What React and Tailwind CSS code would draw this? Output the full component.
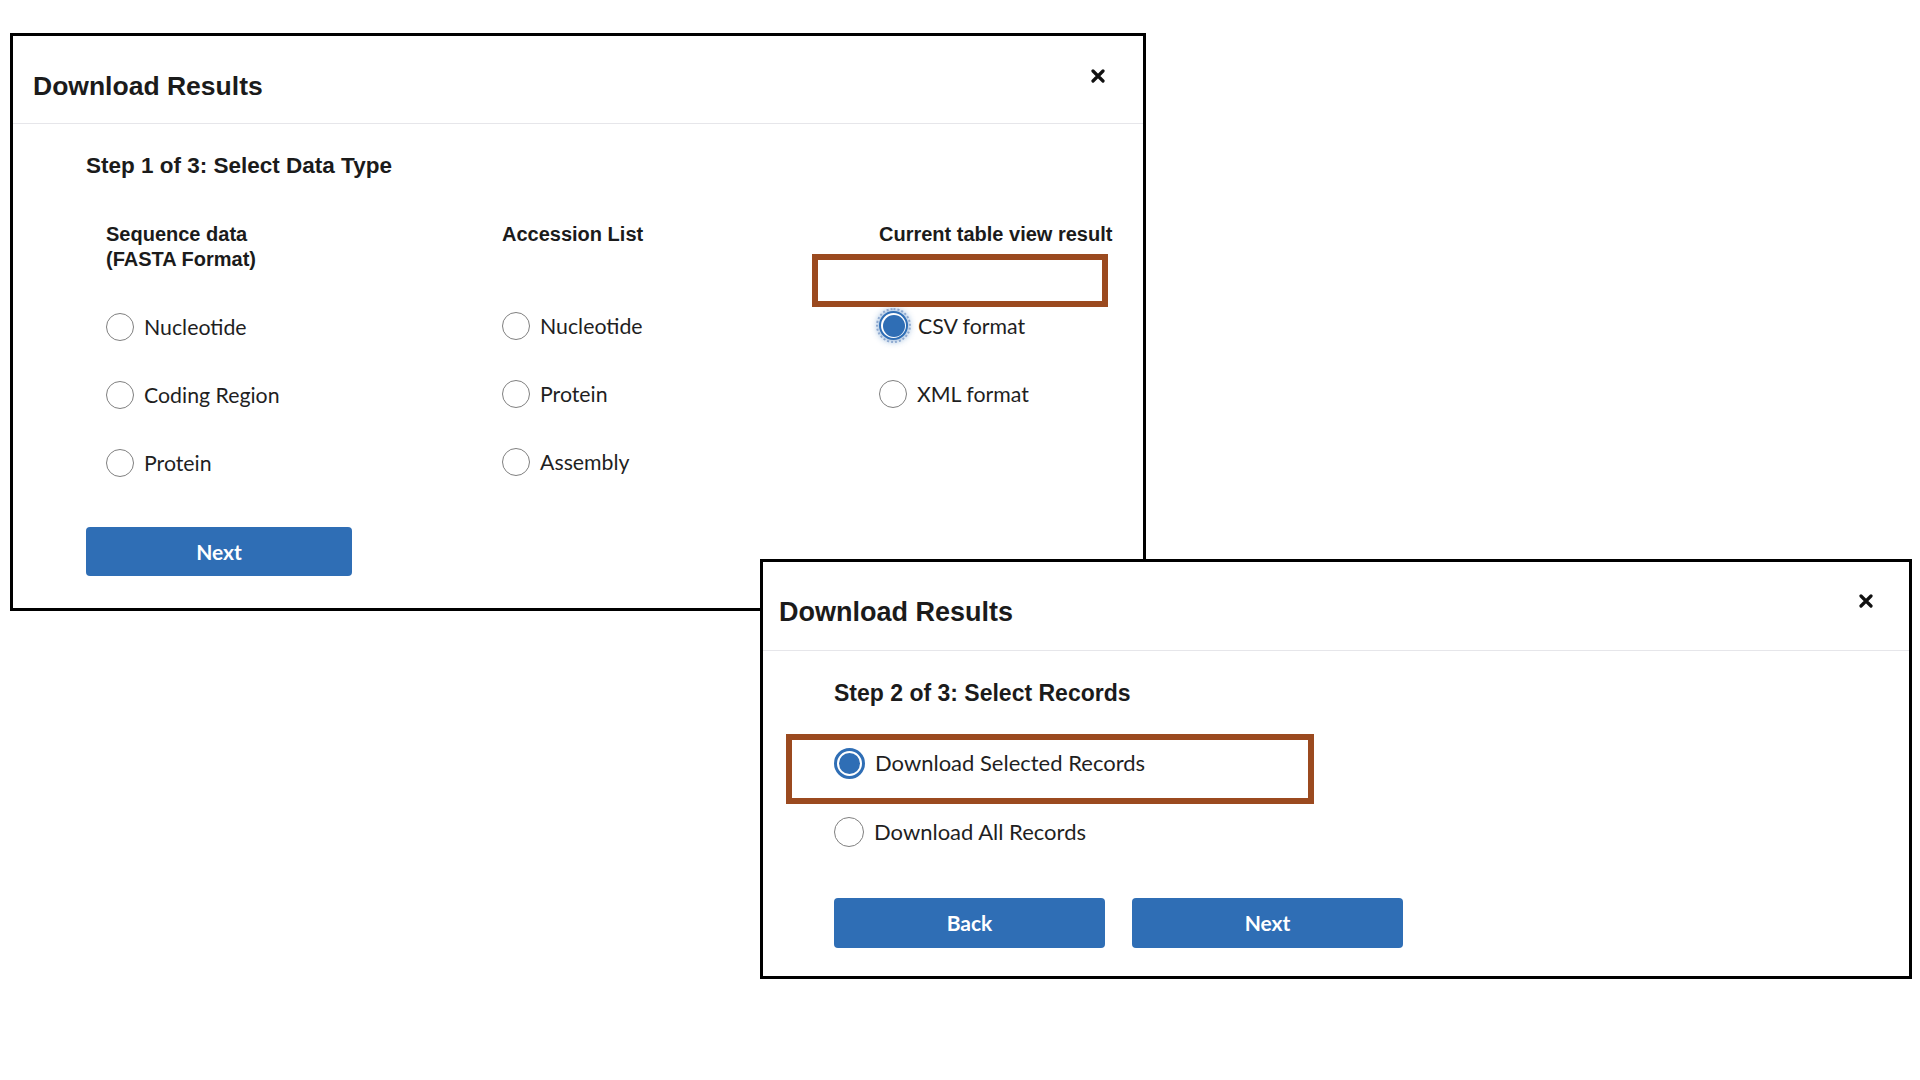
import React from "react";

function CloseX() {
  return (
    <svg width="14" height="14" viewBox="0 0 14 14" className="shrink-0">
      <path d="M2 2 L12 12 M12 2 L2 12" stroke="#111" strokeWidth="3.2" strokeLinecap="round" />
    </svg>
  );
}

function Radio({ label, checked, focus, big }) {
  const box = big ? "h-[30px] w-[30px]" : "h-[28px] w-[28px]";
  const text = big
    ? "font-['Lato',sans-serif] text-[22px] leading-[28px] text-[#1f1f1f]"
    : "font-['Lato',sans-serif] text-[21.3px] leading-[28px] text-[#1f1f1f]";
  return (
    <div className={big ? "flex h-[30px] items-center gap-[10px]" : "flex h-[29px] items-center gap-[10px]"}>
      {checked ? (
        <span
          className={
            focus
              ? "flex h-[29px] w-[29px] shrink-0 rounded-full border-[2.5px] border-[#2f6eb5] bg-white p-[1.5px] outline-2 outline-dotted outline-[#8ea9d0] outline-offset-[1px] shadow-[0_0_6px_2px_rgba(47,110,181,0.45)]"
              : "flex h-[31px] w-[31px] shrink-0 rounded-full border-[3px] border-[#2f6eb5] bg-white p-[2px]"
          }
        >
          <span className="h-full w-full rounded-full bg-[#2f6eb5]" />
        </span>
      ) : (
        <span className={`${box} shrink-0 rounded-full border-[1.5px] border-[#808080] bg-white`} />
      )}
      <span className={text}>{label}</span>
    </div>
  );
}

function Button({ children, w }) {
  return (
    <button
      className={`${w} flex items-center justify-center rounded-[4px] bg-[#2f6eb5] font-['Lato',sans-serif] text-[21px] font-bold text-white`}
    >
      {children}
    </button>
  );
}

export default function App() {
  return (
    <div className="relative h-[1080px] w-[1920px] overflow-hidden bg-white font-['Liberation_Sans',Arial,sans-serif] text-[#1b1b1b]">
      {/* Dialog 1 */}
      <div className="absolute left-[10px] top-[33px] h-[578px] w-[1136px] border-[3px] border-black bg-white">
        <div className="flex items-start justify-between border-b border-[#e6e6ea] pb-[22px] pl-[20px] pr-[38px] pt-[33px]">
          <h2 className="mt-[2px] text-[26.5px] font-bold leading-[30px]">Download Results</h2>
          <CloseX />
        </div>
        <div className="pl-[73px] pt-[29px]">
          <h3 className="text-[22.5px] font-bold leading-[26px]">Step 1 of 3: Select Data Type</h3>
          <div className="ml-[20px] mt-[43px] flex">
            <div className="w-[396px]">
              <div className="h-[50px] text-[20px] font-bold leading-[25px]">
                Sequence data
                <br />
                (FASTA Format)
              </div>
              <div className="mt-[40px] flex flex-col gap-[39px]">
                <Radio label="Nucleotide" />
                <Radio label="Coding Region" />
                <Radio label="Protein" />
              </div>
            </div>
            <div className="w-[377px]">
              <div className="h-[50px] text-[20px] font-bold leading-[25px]">Accession List</div>
              <div className="mt-[39px] flex flex-col gap-[39px]">
                <Radio label="Nucleotide" />
                <Radio label="Protein" />
                <Radio label="Assembly" />
              </div>
            </div>
            <div className="flex-1">
              <div className="h-[50px] text-[20px] font-bold leading-[25px]">Current table view result</div>
              <div className="mt-[39px] flex flex-col gap-[39px]">
                <Radio label="CSV format" checked focus />
                <Radio label="XML format" />
              </div>
            </div>
          </div>
          <div className="mt-[50px] flex">
            <Button w="h-[49px] w-[266px]">Next</Button>
          </div>
        </div>
        <div className="absolute left-[799px] top-[218px] h-[53px] w-[296px] border-[6px] border-[#9b4a1f]" />
      </div>

      {/* Dialog 2 */}
      <div className="absolute left-[760px] top-[559px] h-[420px] w-[1152px] border-[3px] border-black bg-white">
        <div className="flex items-start justify-between border-b border-[#e6e6ea] pb-[23px] pl-[16px] pr-[36px] pt-[32px]">
          <h2 className="mt-[3px] text-[27px] font-bold leading-[30px]">Download Results</h2>
          <CloseX />
        </div>
        <div className="pl-[71px] pt-[29px]">
          <h3 className="text-[23px] font-bold leading-[26px]">Step 2 of 3: Select Records</h3>
          <div className="mt-[42px] flex flex-col gap-[39px]">
            <Radio label="Download Selected Records" checked big />
            <Radio label="Download All Records" big />
          </div>
          <div className="mt-[51px] flex gap-[27px]">
            <Button w="h-[50px] w-[271px]">Back</Button>
            <Button w="h-[50px] w-[271px]">Next</Button>
          </div>
        </div>
        <div className="absolute left-[23px] top-[172px] h-[70px] w-[528px] border-[6px] border-[#9b4a1f]" />
      </div>
    </div>
  );
}
